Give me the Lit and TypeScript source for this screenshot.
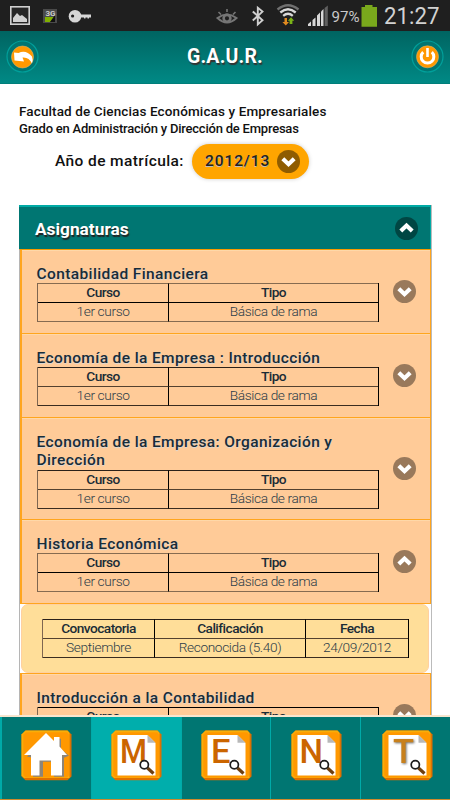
import { LitElement, html, svg, css } from "lit";
import { customElement, property } from "lit/decorators.js";

interface Subject {
  name: string;
  rule: string;
  open?: boolean;
}

const subjects: Subject[] = [
  { name: "Contabilidad Financiera", rule: "a" },
  { name: "Economía de la Empresa : Introducción", rule: "b" },
  { name: "Economía de la Empresa: Organización y Dirección", rule: "b tall" },
  { name: "Historia Económica", rule: "a", open: true },
  { name: "Introducción a la Contabilidad", rule: "c" },
];

@customElement("chevron-badge")
class ChevronBadge extends LitElement {
  @property({ type: Boolean }) up = false;
  static styles = css`
    :host { display: block; width: 23px; height: 23px; border-radius: 50%; background: var(--badge, #99795b); }
    svg { display: block; }
  `;
  render() {
    return html`<svg width="23" height="23" viewBox="0 0 23 23">
      <path d=${this.up ? "M5.8 14 L11.5 8.6 L17.2 14" : "M5.8 8.8 L11.5 14.2 L17.2 8.8"}
        fill="none" stroke="#fff" stroke-width="4.2" />
    </svg>`;
  }
}

@customElement("status-bar")
class StatusBar extends LitElement {
  static styles = css`
    :host { display: block; height: 31px; background: #1f1f1f; }
    svg { display: block; }
    text { font-family: Roboto, sans-serif; }
  `;
  render() {
    return html`<svg width="450" height="31" viewBox="0 0 450 31">
      <rect x="10.8" y="6.8" width="18.4" height="17.4" fill="#252525" stroke="#d0d0d0" stroke-width="1.6" />
      <path d="M13 22 V18 L17 13 L20 16 L22 15 L27 19 V22Z" fill="#d0d0d0" />
      <rect x="43" y="9" width="14" height="14" fill="#4a4a4a" />
      <path d="M45 22 V17 H55 L50 22Z" fill="#80b000" />
      <path d="M55 15 V22 H50Z" fill="#111" />
      <text x="45.5" y="16" font-size="8" font-weight="700" fill="#ccc">3G</text>
      <circle cx="75" cy="16.2" r="6.3" fill="#d6d6d6" /><circle cx="72.6" cy="16" r="1.6" fill="#1f1f1f" />
      <path d="M80 14.5 H91 V17.5 H89 V18.6 H87.5 V17.5 H85.5 V18.6 H84 V17.5 H80Z" fill="#d6d6d6" />
      <g fill="none" stroke="#757575">
        <path d="M217.5 18 Q227 11 236.5 18 Q227 27 217.5 18Z" stroke-width="2" />
        <path d="M218.5 12 L221 14.5 M227 9 V12 M235.5 12 L233 14.5" stroke-width="1.6" />
        <circle cx="227" cy="18.3" r="3.4" stroke-width="2.6" />
      </g>
      <path d="M252.8 11.5 L262.5 20.3 L257.8 24.5 V7.8 L262.5 11.6 L252.8 20.5" fill="none" stroke="#cfcfcf" stroke-width="1.9" />
      <g fill="none" stroke="#d8d8d8" stroke-width="2.3">
        <path d="M277.5 9.5 Q288 1 298.5 9.5" stroke="#707070" /><path d="M280.3 12.5 Q288 6 295.7 12.5" /><path d="M283.2 15.8 Q288 11.8 292.8 15.8" />
      </g>
      <path d="M284.5 18 H287 V22 H289 L285.8 25.6 L282.4 22 H284.5Z" fill="#e08a20" />
      <path d="M289.6 24 V20.8 H287.8 L291 17.2 L294.2 20.8 H292.4 V24Z" fill="#7ab317" />
      <path d="M308 26 V24 L311 21.5 V26Z M312.5 26 V20 L315.5 17.5 V26Z M317 26 V15.5 L320 12.5 V26Z" fill="#d8d8d8" />
      <path d="M321 26 V11.5 L323.5 9 V26Z" fill="#d8d8d8" /><path d="M324.6 26 V8 L327.8 5.5 V26Z" fill="#606060" />
      <text x="331.5" y="21.6" font-size="15.5" textLength="28" lengthAdjust="spacingAndGlyphs" fill="#c9c9c9">97%</text>
      <path d="M361.5 7 H365 V5 H372.5 V7 H377 V26.8 H361.5Z" fill="#79a81c" />
      <text x="384" y="23.8" font-size="23.6" textLength="55.5" lengthAdjust="spacingAndGlyphs" fill="#d2d2d2">21:27</text>
    </svg>`;
  }
}

const letterBox: Record<string, [number, number]> = { M: [9, 27], E: [10, 19.5], N: [8.5, 23.5], T: [11, 21] };

@customElement("nav-icon")
class NavIcon extends LitElement {
  @property() kind = "home";
  static styles = css`
    :host { display: block; width: 51px; height: 51px; }
    svg { display: block; }
    text { font-family: Roboto, sans-serif; font-weight: 500; }
    .shaded { filter: drop-shadow(1.5px 1.5px 1px #777); }
  `;
  render() {
    const [x, w] = letterBox[this.kind] ?? [0, 0];
    const house = svg`
      <path d="M5 26 L25 5 L33 12 V8 H39 V18 L47 25 L42 27 V46 H32 V31 H21 V46 H11 V27Z" fill="#8d8578" transform="translate(1 0.8)" />
      <path d="M3 25 L25 3 L33 11 V7 H38.5 V16.5 L46 25 H41 V45.5 H30 V30.5 H18.5 V45.5 H10 V25Z" fill="#fff" />`;
    const paper = svg`
      <path d="M6.5 5 H36.5 L44.5 13 V45.5 H6.5Z" fill="#fff" />
      <path d="M36.5 5 V12.7 H44.5Z" fill="#b8b8b8" />
      <text class=${this.kind === "T" ? "shaded" : ""} x=${x} y="33.3" font-size="32.5"
        textLength=${w} lengthAdjust="spacingAndGlyphs"
        fill=${this.kind === "T" ? "#c8801c" : "#cb6500"}>${this.kind}</text>
      <path d="M36.5 38 L42.5 43.5" stroke="#70400f" stroke-width="3.2" />
      <circle cx="33.3" cy="34.8" r="4.1" fill="#fff" stroke="#1c1c1c" stroke-width="1.7" />`;
    return html`<svg width="51" height="51" viewBox="0 0 51 51">
      <path d="M4.5 .5 H46.5 L50.5 4.5 V46.5 L46.5 50.2 H4.5 L.5 46.5 V4.5Z" fill="#e07000" />
      <path d="M4.5 .5 H46.5 L48.5 3 V48 H3 L.5 45.5 V4.5Z" fill="#f9ae08" />
      <path d="M5 2.3 H46 L48 4.5 V45.5 L46 47.5 H5 L2.3 45.5 V4.5Z" fill="#ff9800" />
      ${this.kind === "home" ? house : paper}
    </svg>`;
  }
}

@customElement("app-root")
class AppRoot extends LitElement {
  static styles = css`
    :host { display: flex; flex-direction: column; width: 450px; height: 800px; overflow: hidden;
      background: #fff; font-family: Roboto, sans-serif; color: #111; }
    * { box-sizing: border-box; }
    .top { height: 53px; flex: none; display: flex; align-items: center; justify-content: space-between;
      padding: 0 6px 2px; background: linear-gradient(#006461, #008985); border-bottom: 1px solid #007e7a; }
    .round { display: block; width: 33px; height: 33px; }
    .title { font-size: 19.5px; font-weight: 700; color: #fff; text-shadow: 1px 2px 1px #333; letter-spacing: .2px; }
    .main { flex: 1; min-height: 0; overflow: hidden; padding: 19px 18px 0 19px; }
    .faculty { font-size: 13.5px; line-height: 18px; margin-top: -1px; font-weight: 500; letter-spacing: .12px; white-space: nowrap; }
    .degree { font-size: 13px; line-height: 18px; font-weight: 500; letter-spacing: -.22px; white-space: nowrap; }
    .year { display: flex; align-items: center; height: 36px; padding-left: 36px; margin-top: 5px; gap: 7px;
      font-size: 15.5px; font-weight: 500; letter-spacing: .4px; white-space: nowrap; }
    .year .label { width: 130px; }
    .pill { display: flex; align-items: center; justify-content: space-between; width: 117px; height: 35px;
      padding: 0 9px 0 13px; border-radius: 18px; background: #ffa500; color: #222; box-shadow: 0 0 4px #ccc;
      text-shadow: 0 1px 0 #bbb; letter-spacing: .9px; --badge: #8f5c00; }
    .list { width: 413px; margin-top: 26px; border-right: 1px solid #bbb; }
    .head { height: 44px; display: flex; align-items: center; justify-content: space-between; padding: 2px 12px 0 16px;
      background: #007672; border-top: 2px solid #00aaa5; border-right: 1px solid #00aaa5;
      font-size: 17.3px; font-weight: 700; color: #fff; text-shadow: 1px 2px 1px #222; --badge: #004643; }
    .head chevron-badge { margin-top: -2px; }
    .items { border-left: 1px solid #b5b5b5; border-top: 1px solid #f79a00; }
    .item { display: flex; justify-content: space-between; align-items: center; height: 84px; padding: 0 14px 0 15px;
      background: #ffcb98; border: 0 solid #ffa51e; border-width: 0 1px 1px 2px; box-shadow: inset 0 1px #ffd8a8; }
    .item.tall { height: 102px; }
    .item.c { height: 85px; border-top-width: 1px; }
    .body { width: 342px; align-self: flex-start; padding-top: 15px; }
    .name { font-size: 15.5px; line-height: 18px; margin-left: -.5px; font-weight: 500; letter-spacing: .38px; color: #182c38; text-shadow: 0 1px 1px #d8d8d8; }
    .tall .name { width: 320px; padding-bottom: 1px; }
    .grid { display: grid; grid-template-rows: 19px 20px; font-size: 13.7px; letter-spacing: -.55px; text-align: center; color: #2c3c48;
      line-height: 17px; border-left: 1px solid #7f6650; border-right: 1px solid #000; }
    .two { grid-template-columns: 130px 210px; }
    .three { grid-template-columns: 111px 151px 103px; width: 367px; }
    .cell { border-top: 1px solid var(--top); }
    .cell.low { font-weight: 300; letter-spacing: -.38px; border-top-color: var(--mid); border-bottom: 1px solid var(--bottom); }
    .cell.split { border-left: 1px solid #000; }
    .th { font-weight: 500; color: #1a2c36; }
    .a { --top: #866b50; --mid: #000; --bottom: #866b50; }
    .b { --top: #2b2119; --mid: #54412f; --bottom: #3a2c20; }
    .c { --top: #000; --mid: #000; --bottom: #000; }
    .detail { height: 69px; padding: 14px 0 0 20px; margin: 0 2px 0 1px; background: #ffde99;
      border: 1px solid #ffd0a0; border-radius: 7px; }
    .nav { height: 85px; flex: none; display: grid; grid-template-columns: 2px 90px 90px 89px 90px 89px;
      border-top: 2px solid #f8e6cf; border-bottom: 1px solid #d08a2c; background: #00aaa8; }
    .tab { display: flex; justify-content: center; padding-top: 13px; background: #007672; border-right: 1px solid #00aaa8; }
    .tab.on { background: #00aeac; }
    .tab:nth-child(5) { padding-left: 2px; }
    .tab:last-child { border-right: 0; padding-left: 4px; }
  `;

  private courseGrid(rule: string) {
    return html`<div class="grid two ${rule}">
      <div class="cell th">Curso</div><div class="cell th split">Tipo</div>
      <div class="cell low">1er curso</div><div class="cell low split">Básica de rama</div>
    </div>`;
  }

  private detail() {
    return html`<div class="detail"><div class="grid three b">
      <div class="cell th">Convocatoria</div><div class="cell th split">Calificación</div><div class="cell th split">Fecha</div>
      <div class="cell low">Septiembre</div><div class="cell low split">Reconocida (5.40)</div><div class="cell low split">24/09/2012</div>
    </div></div>`;
  }

  render() {
    return html`
      <status-bar></status-bar>
      <header class="top">
        <svg class="round" viewBox="0 0 33 33">
          <circle cx="16.5" cy="16.5" r="15.5" fill="#007571" stroke="#00a09b" stroke-width="1.2" />
          <circle cx="16.5" cy="17" r="11" fill="#ff9800" stroke="#d8b067" stroke-width=".6" />
          <path d="M8 12.5 L12.5 13 Q20 9.5 26 16.5 Q27.3 20 26 23.5 Q23 16.8 16.5 17.5 L18 21.5 L8.5 20.5Z" fill="#fff" />
        </svg>
        <div class="title">G.A.U.R.</div>
        <svg class="round" viewBox="0 0 33 33">
          <circle cx="16.5" cy="16.5" r="15.5" fill="#007571" stroke="#00a09b" stroke-width="1.2" />
          <circle cx="16.5" cy="16.8" r="11" fill="#ff9800" stroke="#d8b067" stroke-width=".6" />
          <path d="M12.2 12.2 A6.3 6.3 0 1 0 20.8 12.2" fill="none" stroke="#fff" stroke-width="3" />
          <path d="M16.5 8 V17" stroke="#fff" stroke-width="2.6" />
        </svg>
      </header>
      <main class="main">
        <div class="faculty">Facultad de Ciencias Económicas y Empresariales</div>
        <div class="degree">Grado en Administración y Dirección de Empresas</div>
        <div class="year"><span class="label">Año de matrícula:</span>
          <div class="pill"><span>2012/13</span><chevron-badge></chevron-badge></div></div>
        <section class="list">
          <div class="head"><span>Asignaturas</span><chevron-badge up></chevron-badge></div>
          <div class="items">${subjects.map((s) => html`
            <div class="item ${s.rule}">
              <div class="body"><div class="name">${s.name}</div>${this.courseGrid(s.rule.split(" ")[0])}</div>
              <chevron-badge ?up=${s.open}></chevron-badge>
            </div>
            ${s.open ? this.detail() : null}`)}
          </div>
        </section>
      </main>
      <nav class="nav"><span></span>
        ${["home", "M", "E", "N", "T"].map((k) => html`<div class="tab ${k === "M" ? "on" : ""}"><nav-icon kind=${k}></nav-icon></div>`)}
      </nav>`;
  }
}
